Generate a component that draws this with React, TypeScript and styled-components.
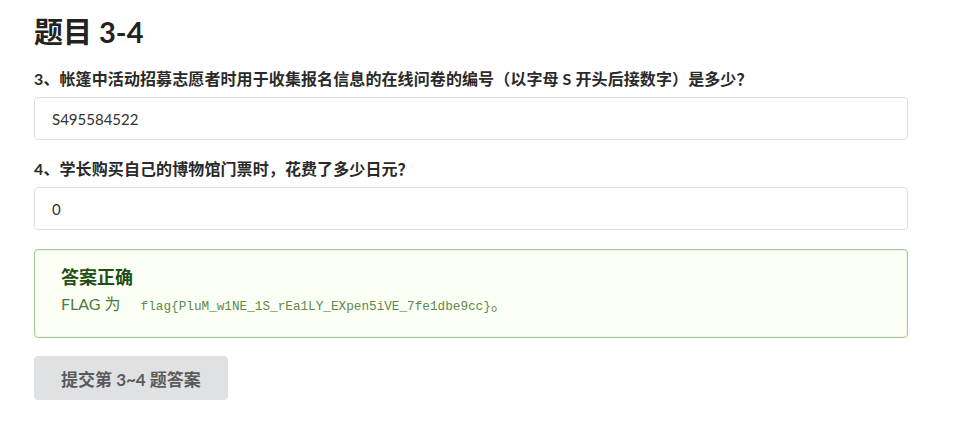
import React from 'react';
import styled, { createGlobalStyle } from 'styled-components';

const GlobalStyle = createGlobalStyle`
  body {
    margin: 0;
    background: #ffffff;
    font-family: Lato, "Noto Sans CJK SC", sans-serif;
    color: #222;
  }
`;

const Page = styled.div`
  width: 874px;
  padding: 14px 0 0 34px;
`;

const Title = styled.h1`
  margin: 0 0 19px;
  font-size: 29px;
  line-height: 36px;
  font-weight: 700;
  color: #222;
`;

const Field = styled.div`
  margin-bottom: 19px;
`;

const Label = styled.label`
  display: block;
  margin-bottom: 8px;
  font-size: 16px;
  line-height: 20px;
  font-weight: 700;
  letter-spacing: 0.1px;
  color: #2a2a2a;
`;

const TextInput = styled.input`
  box-sizing: border-box;
  display: block;
  width: 100%;
  height: 43px;
  padding: 0 17px;
  border: 1px solid #dedede;
  border-radius: 4px;
  font-family: Lato, "Noto Sans CJK SC", sans-serif;
  font-size: 15px;
  color: #333;
  outline: none;
`;

const Alert = styled.div`
  box-sizing: border-box;
  height: 89px;
  padding: 15px 26px;
  border: 1px solid #a6c99a;
  border-radius: 4px;
  background: #fcfff5;
  box-shadow: 0 0 0 1px rgba(166, 201, 154, 0.15) inset;
`;

const AlertTitle = styled.div`
  font-size: 18px;
  line-height: 24px;
  font-weight: 700;
  color: #1f4f17;
`;

const AlertText = styled.div`
  margin-top: 5px;
  font-size: 16px;
  line-height: 20px;
  color: #4a7d3a;
`;

const Code = styled.code`
  margin-left: 20px;
  font-family: "Liberation Mono", monospace;
  font-size: 12.7px;
  color: #5b8a4b;
`;

const SubmitButton = styled.button`
  display: block;
  margin-top: 18px;
  height: 44px;
  padding: 0 27px;
  border: none;
  border-radius: 4px;
  background: #e0e1e2;
  font-family: Lato, "Noto Sans CJK SC", sans-serif;
  font-size: 17px;
  font-weight: 700;
  color: #5a5a5a;
`;

export default function App() {
  return (
    <>
      <GlobalStyle />
      <Page>
        <Title>题目 3-4</Title>
        <Field>
          <Label>3、帐篷中活动招募志愿者时用于收集报名信息的在线问卷的编号（以字母 S 开头后接数字）是多少？</Label>
          <TextInput defaultValue="S495584522" />
        </Field>
        <Field>
          <Label>4、学长购买自己的博物馆门票时，花费了多少日元？</Label>
          <TextInput defaultValue="0" />
        </Field>
        <Alert>
          <AlertTitle>答案正确</AlertTitle>
          <AlertText>
            FLAG 为<Code>flag{'{'}PluM_w1NE_1S_rEa1LY_EXpen5iVE_7fe1dbe9cc{'}'}</Code>。
          </AlertText>
        </Alert>
        <SubmitButton>提交第 3~4 题答案</SubmitButton>
      </Page>
    </>
  );
}
